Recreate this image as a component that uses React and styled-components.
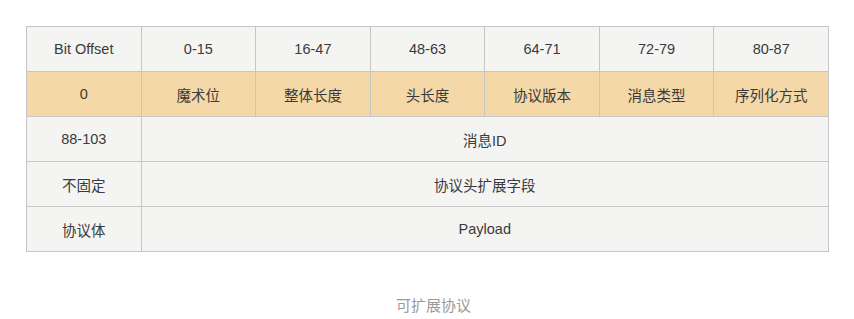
import React from 'react';
import styled, { createGlobalStyle } from 'styled-components';

// GLOBAL RESET
const GlobalStyle = createGlobalStyle`
  body {
    margin: 0;
    background: #ffffff;
    font-family: 'Helvetica Neue', 'Liberation Sans', Arial, 'Noto Sans CJK SC', sans-serif;
  }
`;

const Figure = styled.figure`
  margin: 0;
  padding: 26px 0 0 26px;
  width: 803px;
`;

const Table = styled.table`
  border-collapse: collapse;
  table-layout: fixed;
  width: 803px;
  border: 1px solid #c6c6c6;
`;

const Cell = styled.td`
  height: 44px;
  padding: 0;
  border: 1px solid #c6c6c6;
  background: ${(props) => (props.$accent ? '#f4d8a7' : '#f4f4f3')};
  color: #3a3a3a;
  font-size: 14.5px;
  text-align: center;
  vertical-align: middle;
`;

const Caption = styled.figcaption`
  margin-top: 42px;
  text-align: center;
  color: #9a9a9a;
  font-size: 15px;
  padding-left: 12px;
`;

const header = ['Bit Offset', '0-15', '16-47', '48-63', '64-71', '72-79', '80-87'];
const fields = ['0', '魔术位', '整体长度', '头长度', '协议版本', '消息类型', '序列化方式'];
const spans = [
  ['88-103', '消息ID'],
  ['不固定', '协议头扩展字段'],
  ['协议体', 'Payload'],
];

const App = () => {
  return (
    <>
      <GlobalStyle />
      <Figure>
        <Table>
          <tbody>
            <tr>
              {header.map((h) => (
                <Cell key={h}>{h}</Cell>
              ))}
            </tr>
            <tr>
              {fields.map((f) => (
                <Cell key={f} $accent>
                  {f}
                </Cell>
              ))}
            </tr>
            {spans.map(([label, value]) => (
              <tr key={label}>
                <Cell>{label}</Cell>
                <Cell colSpan={6}>{value}</Cell>
              </tr>
            ))}
          </tbody>
        </Table>
        <Caption>可扩展协议</Caption>
      </Figure>
    </>
  );
};

export default App;
